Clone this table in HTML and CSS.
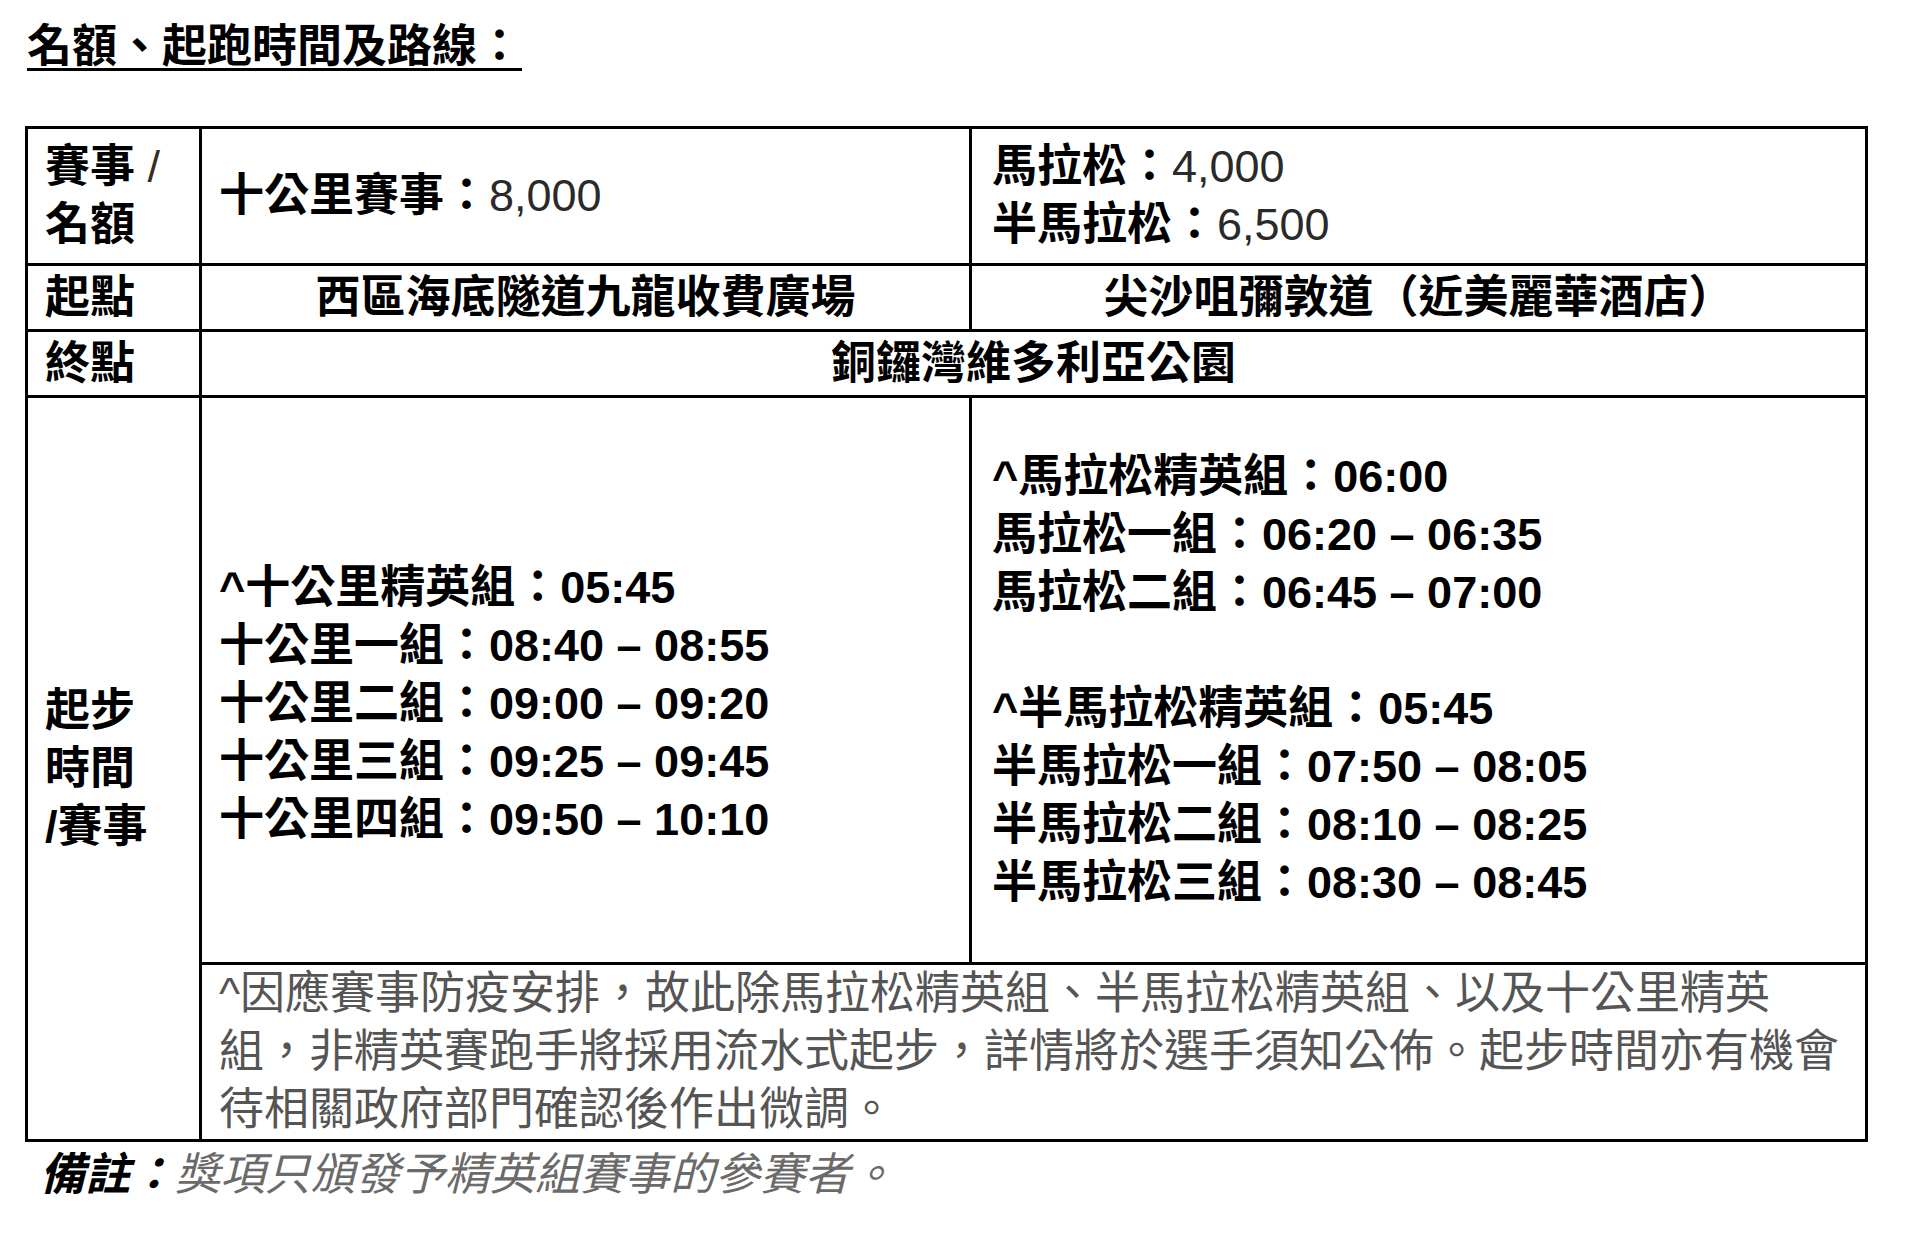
FILE: index.html
```html
<!DOCTYPE html>
<html lang="zh-Hant">
<head>
<meta charset="utf-8">
<title>名額、起跑時間及路線</title>
<link rel="stylesheet" href="styles.css">
</head>
<body>
<main class="page">
  <h1 class="title">名額、起跑時間及路線：</h1>
  <table class="schedule">
    <colgroup>
      <col class="col-label">
      <col class="col-ten">
      <col class="col-marathon">
    </colgroup>
    <tr class="row-quota">
      <th class="label">賽事 <span class="slash">/</span><br>名額</th>
      <td class="cell"><b>十公里賽事：</b><span class="num">8,000</span></td>
      <td class="cell cell-right"><b>馬拉松：</b><span class="num">4,000</span><br><b>半馬拉松：</b><span class="num">6,500</span></td>
    </tr>
    <tr class="row-place">
      <th class="label">起點</th>
      <td class="cell center"><b>西區海底隧道九龍收費廣場</b></td>
      <td class="cell center"><b>尖沙咀彌敦道（近美麗華酒店）</b></td>
    </tr>
    <tr class="row-place">
      <th class="label">終點</th>
      <td class="cell center" colspan="2"><b>銅鑼灣維多利亞公園</b></td>
    </tr>
    <tr class="row-times">
      <th class="label" rowspan="2">起步<br>時間<br>/賽事</th>
      <td class="cell times times-left">
        <b>^十公里精英組：05:45</b><br>
        <b>十公里一組：08:40 – 08:55</b><br>
        <b>十公里二組：09:00 – 09:20</b><br>
        <b>十公里三組：09:25 – 09:45</b><br>
        <b>十公里四組：09:50 – 10:10</b>
      </td>
      <td class="cell cell-right times times-right">
        <b>^馬拉松精英組：06:00</b><br>
        <b>馬拉松一組：06:20 – 06:35</b><br>
        <b>馬拉松二組：06:45 – 07:00</b><br>
        <br>
        <b>^半馬拉松精英組：05:45</b><br>
        <b>半馬拉松一組：07:50 – 08:05</b><br>
        <b>半馬拉松二組：08:10 – 08:25</b><br>
        <b>半馬拉松三組：08:30 – 08:45</b>
      </td>
    </tr>
    <tr class="row-note">
      <td class="cell note" colspan="2">^因應賽事防疫安排，故此除馬拉松精英組、半馬拉松精英組、以及十公里精英<br>組，非精英賽跑手將採用流水式起步，詳情將於選手須知公佈。起步時間亦有機會<br>待相關政府部門確認後作出微調。</td>
    </tr>
  </table>
  <p class="remark"><b class="remark-label">備註：</b><span class="remark-text">獎項只頒發予精英組賽事的參賽者。</span></p>
</main>
</body>
</html>
```

FILE: styles.css
```css
html, body {
  margin: 0;
  padding: 0;
  background: #ffffff;
}

body {
  font-family: "Liberation Sans", "Noto Sans CJK TC", "Noto Sans CJK SC", sans-serif;
  font-size: 45px;
  line-height: 58px;
  color: #000;
}

.page {
  padding: 17px 0 0 25px;
}

.title {
  margin: 0 0 50px 2px;
  font-size: 45px;
  line-height: 59px;
  font-weight: 700;
  text-decoration: underline;
  text-decoration-thickness: 3px;
  text-underline-offset: 6px;
}

.schedule {
  border-collapse: collapse;
  table-layout: fixed;
  width: 1840px;
}

.col-label { width: 174px; }
.col-ten { width: 770px; }
.col-marathon { width: 896px; }

.schedule th,
.schedule td {
  border: 3px solid #000;
  vertical-align: middle;
}

.label {
  text-align: left;
  font-weight: 700;
  padding: 0 0 0 17px;
}

.slash {
  font-weight: 400;
  color: #3a2a20;
}

.cell {
  padding: 0 17px;
  text-align: left;
}

.cell-right {
  padding-left: 20px;
}

.center {
  text-align: center;
  padding: 0;
}

.num {
  font-weight: 400;
  color: #2a2a2a;
}

.row-quota th,
.row-quota td {
  height: 134px;
  padding-top: 0;
  padding-bottom: 0;
}

.row-place th,
.row-place td {
  height: 63px;
}

.times-right {
  padding-top: 50px;
  padding-bottom: 50px;
}

.times-left {
  padding-top: 48px;
  padding-bottom: 0;
}

.note {
  color: #555;
  padding-top: 0;
  padding-bottom: 0;
  white-space: nowrap;
}

.remark {
  margin: 4px 0 0 15px;
  font-style: italic;
}

.remark-label {
  font-weight: 700;
  color: #000;
}

.remark-text {
  color: #6a6a6a;
}
```
